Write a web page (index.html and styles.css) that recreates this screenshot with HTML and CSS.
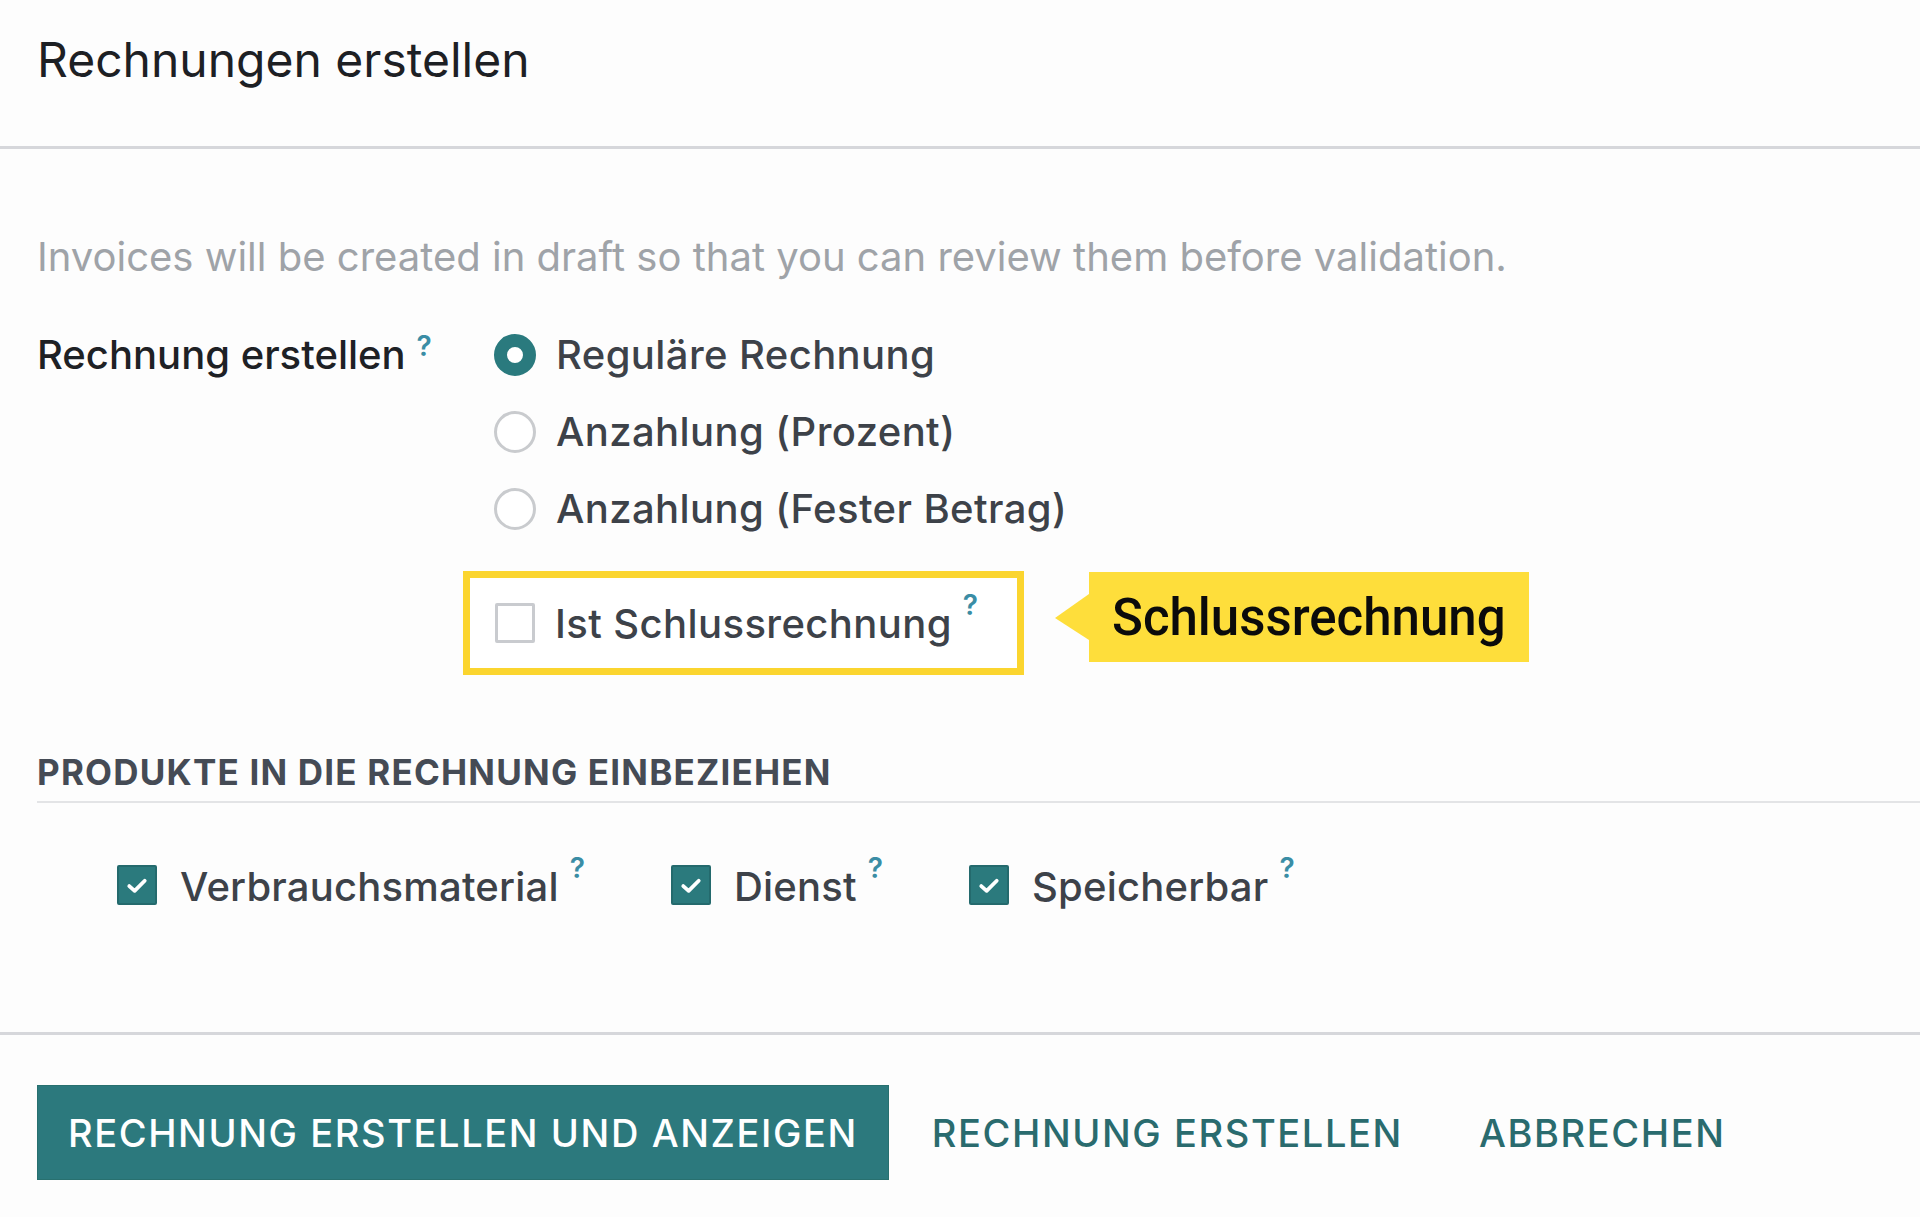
FILE: index.html
```html
<!DOCTYPE html>
<html lang="de">
<head>
<meta charset="utf-8">
<title>Rechnungen erstellen</title>
<link rel="stylesheet" href="styles.css">
</head>
<body>
<div class="dialog">
  <header class="head">
    <h1 class="title">Rechnungen erstellen</h1>
  </header>

  <main class="content">
    <p class="note">Invoices will be created in draft so that you can review them before validation.</p>

    <div class="field">
      <div class="field-label">Rechnung erstellen<sup class="help">?</sup></div>
      <div class="options">
        <div class="radio-row">
          <span class="radio radio-on"></span>
          <span class="opt-text">Reguläre Rechnung</span>
        </div>
        <div class="radio-row">
          <span class="radio"></span>
          <span class="opt-text">Anzahlung (Prozent)</span>
        </div>
        <div class="radio-row">
          <span class="radio"></span>
          <span class="opt-text">Anzahlung (Fester Betrag)</span>
        </div>

        <div class="final-row">
          <div class="highlight">
            <span class="box"></span>
            <span class="opt-text">Ist Schlussrechnung<sup class="help">?</sup></span>
          </div>
          <div class="callout">
            <span class="callout-arrow"></span>
            <span class="callout-box">Schlussrechnung</span>
          </div>
        </div>
      </div>
    </div>

    <h2 class="section">PRODUKTE IN DIE RECHNUNG EINBEZIEHEN</h2>

    <div class="checks">
      <div class="check-item">
        <span class="box box-on"><svg viewBox="0 0 20 16" class="tick"><path d="M3.5 8.5 L8 12.5 L16.5 4" /></svg></span>
        <span class="opt-text">Verbrauchsmaterial<sup class="help">?</sup></span>
      </div>
      <div class="check-item">
        <span class="box box-on"><svg viewBox="0 0 20 16" class="tick"><path d="M3.5 8.5 L8 12.5 L16.5 4" /></svg></span>
        <span class="opt-text">Dienst<sup class="help">?</sup></span>
      </div>
      <div class="check-item">
        <span class="box box-on"><svg viewBox="0 0 20 16" class="tick"><path d="M3.5 8.5 L8 12.5 L16.5 4" /></svg></span>
        <span class="opt-text">Speicherbar<sup class="help">?</sup></span>
      </div>
    </div>
  </main>

  <footer class="foot">
    <button class="btn btn-primary">RECHNUNG ERSTELLEN UND ANZEIGEN</button>
    <button class="btn btn-link">RECHNUNG ERSTELLEN</button>
    <button class="btn btn-link">ABBRECHEN</button>
  </footer>
</div>
</body>
</html>
```

FILE: styles.css
```css
* { box-sizing: border-box; }

html, body {
  margin: 0;
  padding: 0;
  background: #fdfdfd;
}

body {
  font-family: Inter, Roboto, "Liberation Sans", sans-serif;
  color: #3d4249;
}

.dialog {
  width: 1920px;
  height: 1217px;
  overflow: hidden;
}

/* Header */
.head {
  height: 149px;
  padding: 32px 37px 0;
  border-bottom: 3px solid #d6d7db;
}

.title {
  margin: 0;
  font-size: 48px;
  line-height: 56px;
  font-weight: 400;
  color: #1d2024;
}

/* Content */
.content {
  padding: 0 0 0 37px;
}

.note {
  margin: 0;
  padding-top: 84px;
  font-size: 40px;
  line-height: 48px;
  color: #9fa3a8;
}

.field {
  display: flex;
  margin-top: 35px;
}

.field-label {
  width: 457px;
  flex: none;
  height: 77px;
  display: flex;
  align-items: center;
  font-size: 40px;
  font-weight: 500;
  color: #1e2125;
}

.help {
  font-size: 28px;
  font-weight: 600;
  color: #3a8da5;
  margin-left: 11px;
  position: relative;
  top: -9px;
  letter-spacing: 0;
}

.options {
  display: flex;
  flex-direction: column;
}

.radio-row {
  height: 77px;
  display: flex;
  align-items: center;
  gap: 20px;
}

.opt-text {
  font-size: 40px;
  font-weight: 500;
  letter-spacing: 0.4px;
  color: #3d4249;
}

.radio {
  width: 42px;
  height: 42px;
  border-radius: 50%;
  border: 3px solid #c9cbce;
  background: #fff;
  flex: none;
}

.radio-on {
  border: 13px solid #2a7a7e;
}

.final-row {
  display: flex;
  align-items: center;
  margin-top: 24px;
  margin-left: -31px;
}

.highlight {
  width: 561px;
  height: 104px;
  border: 7px solid #fbd52f;
  display: flex;
  align-items: center;
  gap: 20px;
  padding-left: 25px;
  background: #fff;
}

.box {
  width: 40px;
  height: 40px;
  border: 3px solid #c9cbcf;
  border-radius: 2px;
  background: #fff;
  flex: none;
  display: flex;
  align-items: center;
  justify-content: center;
}

.box-on {
  background: #2b7a7d;
  border: 2px solid #246a6d;
}

.tick {
  width: 24px;
  height: 19px;
}

.tick path {
  fill: none;
  stroke: #fff;
  stroke-width: 3.2;
  stroke-linecap: round;
  stroke-linejoin: round;
}

.callout {
  display: flex;
  align-items: center;
  margin-left: 31px;
  margin-top: -12px;
}

.callout-arrow {
  width: 34px;
  height: 46px;
  background: #fede3b;
  clip-path: polygon(100% 0, 0 52%, 100% 100%);
}

.callout-box {
  height: 90px;
  background: #fede3b;
  display: flex;
  align-items: center;
  padding: 0 23px;
  font-family: Roboto, "Liberation Sans", sans-serif;
  font-size: 51px;
  font-weight: 500;
  color: #0b0b0b;
}

.section {
  margin: 76px 0 0;
  padding-bottom: 8px;
  border-bottom: 2px solid #e3e4e6;
  font-size: 35px;
  line-height: 42px;
  font-weight: 700;
  letter-spacing: 1.2px;
  color: #454b55;
}

.checks {
  display: flex;
  align-items: center;
  height: 77px;
  margin-top: 44px;
  padding-left: 80px;
}

.checks .opt-text {
  letter-spacing: 0.2px;
}

.check-item {
  display: flex;
  align-items: center;
  gap: 23px;
  margin-right: 86px;
}

/* Footer */
.foot {
  margin-top: 108px;
  border-top: 3px solid #d6d7db;
  padding: 50px 37px 0;
  display: flex;
  align-items: center;
  gap: 10px;
}

.btn {
  font-family: Inter, Roboto, "Liberation Sans", sans-serif;
  font-size: 38px;
  font-weight: 500;
  letter-spacing: 1.6px;
  height: 95px;
  padding: 0 30px;
  border: none;
  background: transparent;
  cursor: pointer;
}

.btn-primary {
  background: #2c797d;
  color: #fff;
  border: 1px solid #28706f;
}

.btn-link {
  color: #2a6b6e;
  padding: 0 33px;
}
```
